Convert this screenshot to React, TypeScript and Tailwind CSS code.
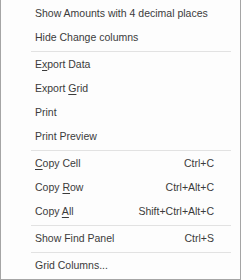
import { ReactNode } from "react";

type Item = {
  label: ReactNode;
  shortcut?: string;
};

const U = ({ children }: { children: ReactNode }) => <span className="underline underline-offset-[2px]">{children}</span>;

const groups: Item[][] = [
  [{ label: "Show Amounts with 4 decimal places" }, { label: "Hide Change columns" }],
  [
    { label: <>E<U>x</U>port Data</> },
    { label: <>Export <U>G</U>rid</> },
    { label: "Print" },
    { label: "Print Preview" },
  ],
  [
    { label: <><U>C</U>opy Cell</>, shortcut: "Ctrl+C" },
    { label: <>Copy <U>R</U>ow</>, shortcut: "Ctrl+Alt+C" },
    { label: <>Copy <U>A</U>ll</>, shortcut: "Shift+Ctrl+Alt+C" },
  ],
  [{ label: "Show Find Panel", shortcut: "Ctrl+S" }],
  [{ label: "Grid Columns..." }],
];

function MenuRow({ item }: { item: Item }) {
  return (
    <div className="flex h-[24px] items-center justify-between whitespace-nowrap pl-[34px] pr-[26px]">
      <span>{item.label}</span>
      {item.shortcut && <span>{item.shortcut}</span>}
    </div>
  );
}

export default function App() {
  return (
    <div
      className="flex h-[280px] w-[241px] flex-col border-x border-b border-[#a5a5a5] bg-[#fdfdfd] pt-[2px] text-[10.5px] text-[#3b3b3b]"
      style={{ fontFamily: '"Liberation Sans", Arial, sans-serif' }}
    >
      {groups.map((group, gi) => (
        <div key={gi}>
          {gi > 0 && (
            <div className="flex h-[3px] items-center pl-[30px] pr-[9px]">
              <div className="h-px w-full bg-[#e2e2e2]" />
            </div>
          )}
          {group.map((item, i) => (
            <MenuRow key={i} item={item} />
          ))}
        </div>
      ))}
    </div>
  );
}
